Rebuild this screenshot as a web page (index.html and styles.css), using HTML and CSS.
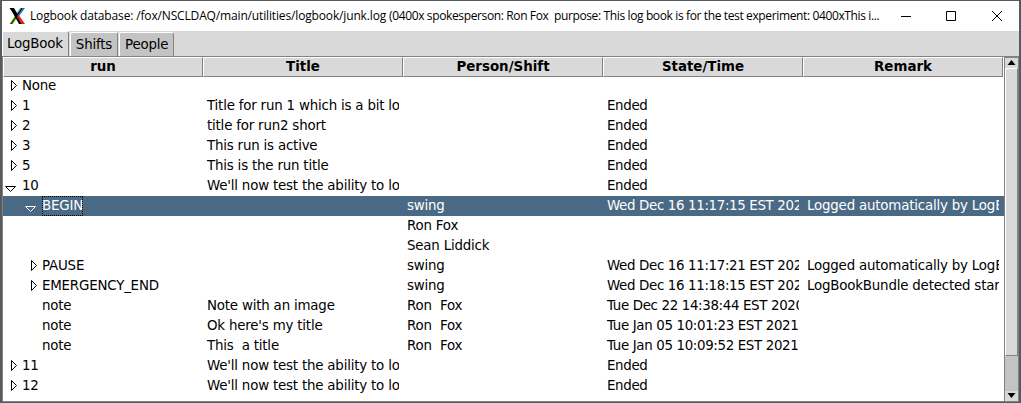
FILE: index.html
```html
<!DOCTYPE html>
<html lang="en">
<head>
<meta charset="utf-8">
<title>Logbook database</title>
<link rel="stylesheet" href="styles.css">
</head>
<body>
<div class="window">
  <header class="titlebar">
    <svg class="logo" width="16" height="16" viewBox="0 0 16 16">
      <path d="M11 0H14.5L4 16H0.5z" fill="#7ac52a"/>
      <path d="M1 0H5L14 16H10z" fill="#000"/>
      <path d="M12.5 0H16L9.5 9 7.5 6.5z" fill="#2f6fd8"/>
      <path d="M8 9L9.7 7 16 16H12.5z" fill="#d8261c"/>
      <path d="M0.5 0H4.5L8.5 6 12.5 0H13.7L2.5 16H1.3L6.8 8.6z" fill="#000"/>
    </svg>
    <span class="caption"><span class="path">Logbook database: /fox/NSCLDAQ/main/utilities/logbook/junk.log </span><span class="about">(0400x spokesperson: Ron Fox&nbsp; purpose: This log book is for the test experiment: 0400xThis i...</span></span>
    <svg class="controls" width="98" height="12" viewBox="0 0 98 12" fill="none" stroke="#000">
      <path d="M0 6.5H10"/><path d="M45.5 1.5H54.5V10.5H45.5z"/><path d="M91 1L101 11M101 1L91 11"/>
    </svg>
  </header>
  <nav class="tabs">
    <span class="tab active">LogBook</span><span class="tab">Shifts</span><span class="tab">People</span>
  </nav>
  <main class="pane">
    <div class="tree">
      <div class="head"><b>run</b><b>Title</b><b>Person/Shift</b><b>State/Time</b><b>Remark</b></div>
      <div class="rows" id="rows"></div>
    </div>
    <div class="scroll">
      <svg class="arrow" width="13" height="10" viewBox="0 0 13 10"><path d="M6.5 2L10.5 7H2.5z"/></svg>
      <div class="thumb"></div>
      <div class="trough"></div>
      <svg class="arrow" width="13" height="10" viewBox="0 0 13 10"><path d="M6.5 7L10.5 2H2.5z"/></svg>
    </div>
  </main>
</div>
<script src="rows.js"></script>
</body>
</html>
```
FILE: rows.js
```js
const long = "We'll now test the ability to log";
const auto = "Logged automatically by LogBook";
// indent level, indicator (c = closed, o = open), then the five columns
const data = [
  [0, "c", "None"],
  [0, "c", "1", "Title for run 1 which is a bit long", "", "Ended"],
  [0, "c", "2", "title for run2 short", "", "Ended"],
  [0, "c", "3", "This run is active", "", "Ended"],
  [0, "c", "5", "This is the run title", "", "Ended"],
  [0, "o", "10", long, "", "Ended"],
  [1, "o", "BEGIN", "", "swing", "Wed Dec 16 11:17:15 EST 2020", auto],
  [1, "", "", "", "Ron Fox"],
  [1, "", "", "", "Sean Liddick"],
  [1, "c", "PAUSE", "", "swing", "Wed Dec 16 11:17:21 EST 2020", auto],
  [1, "c", "EMERGENCY_END", "", "swing", "Wed Dec 16 11:18:15 EST 2020", "LogBookBundle detected start"],
  [1, "", "note", "Note with an image", "Ron  Fox", "Tue Dec 22 14:38:44 EST 2020"],
  [1, "", "note", "Ok here's my title", "Ron  Fox", "Tue Jan 05 10:01:23 EST 2021"],
  [1, "", "note", "This  a title", "Ron  Fox", "Tue Jan 05 10:09:52 EST 2021"],
  [0, "c", "11", long, "", "Ended"],
  [0, "c", "12", long, "", "Ended"]
];
const marks = {
  c: '<path d="M8.5 4.5V14.5L13.5 9.5z"/>',
  o: '<path d="M2.5 10.5H12.5L7.5 15.5z"/>',
  "": ""
};
document.getElementById("rows").innerHTML = data.map(([level, mark, ...cells]) => {
  const cols = [0, 1, 2, 3, 4].map(i => {
    const text = `<span class="text">${cells[i] || ""}</span>`;
    return i ? `<div class="cell${i === 3 ? " time" : ""}">${text}</div>`
      : `<div class="cell first level${level}"><svg class="mark" width="19" height="20" viewBox="0 0 19 20">${marks[mark]}</svg>${text}</div>`;
  }).join("");
  return `<div class="row${cells[0] === "BEGIN" ? " selected" : ""}">${cols}</div>`;
}).join("");
```
FILE: styles.css
```css
* { box-sizing: border-box; }
body { margin: 0; overflow: hidden; background: #555b60; font: 13.4px "DejaVu Sans", sans-serif; color: #000; }
.window { width: 1021px; height: 403px; padding: 1px 2px 1px 2px; display: flex; flex-direction: column; }
.titlebar { height: 30px; background: #fff; display: flex; align-items: center; padding-left: 7px; flex: none; }
.logo { margin-right: 5px; }
.caption { width: 849px; flex: none; font: 12px/16px "Open Sans", sans-serif; white-space: pre; }
.path { letter-spacing: -0.15px; }
.about { letter-spacing: -0.37px; }
.controls { margin-left: 22px; overflow: visible; flex: none; }
.tabs { height: 25px; background: #d9d9d9; display: flex; flex: none; align-items: flex-end; letter-spacing: -0.2px; }
.tab { height: 24px; padding: 0 5px; line-height: 22px; background: #c3c3c3; border: 1px solid #fff; border-right-color: #828282; border-bottom: 0; border-radius: 2px 3px 0 0; margin-right: 1px; }
.tab.active { background: #d9d9d9; height: 25px; padding-left: 4px; line-height: 24px; }
.tab:not(.active) { line-height: 23px; }
.pane { flex: 1; display: flex; background: #fff; border: 1px solid #828282; border-right: 0; min-height: 0; }
.tree { width: 1001px; flex: none; }
.head { display: grid; grid-template-columns: repeat(5, 200px); height: 19px; }
.head b { background: #d9d9d9; border: 1px solid #fff; border-right-color: #828282; border-bottom-color: #828282; text-align: center; line-height: 18px; }
.row { display: grid; grid-template-columns: repeat(5, 200px); height: 20px; line-height: 20px; letter-spacing: -0.2px; }
.cell { padding-left: 4px; margin-right: 4px; overflow: hidden; white-space: pre; }
.time { letter-spacing: -0.35px; }
.first { display: flex; padding-left: 0; }
.level1 { padding-left: 20px; }
.mark { fill: none; stroke: #000; flex: none; }
.selected { background: #4a6984; color: #fff; }
.selected .mark { stroke: #fff; }
.selected .first .text { outline: 1px dotted #000; outline-offset: -1px; }
.scroll { width: 15px; background: #c3c3c3; display: flex; flex-direction: column; border: 1px solid #828282; border-bottom: 0; }
.arrow { background: #d9d9d9; flex: none; }
.thumb { height: 288px; background: #d9d9d9; border: 1px solid #fff; border-right-color: #828282; border-bottom-color: #828282; }
.trough { flex: 1; }
```
